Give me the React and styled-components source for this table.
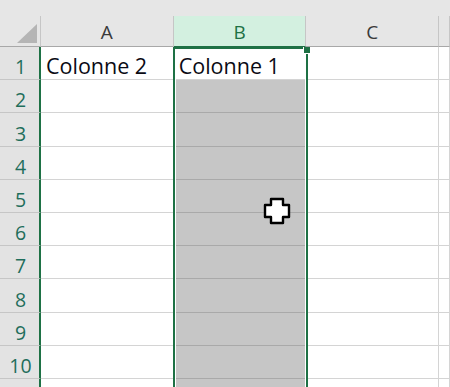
import React from 'react';
import styled, { createGlobalStyle } from 'styled-components';

const GlobalStyle = createGlobalStyle`
  html, body {
    margin: 0;
    padding: 0;
    background: #ffffff;
    overflow: hidden;
  }
`;

const GREEN = '#1e7145';
const COLS = ['A', 'B', 'C', ''];
const ROWS = 11;

const cellText = {
  1: { A: 'Colonne 2', B: 'Colonne 1' },
};

const StSheet = styled.div`
  position: relative;
  width: 450px;
  height: 387px;
  overflow: hidden;
  font-family: 'Open Sans', 'Liberation Sans', sans-serif;
  background: #ffffff;
`;

const StTopBand = styled.div`
  height: 16px;
  background: #e6e6e6;
`;

const StGrid = styled.div`
  display: grid;
  grid-template-columns: 41px repeat(3, 132.7px) 1fr;
  grid-template-rows: 31px repeat(${ROWS}, 33.2px);
`;

const StCorner = styled.div`
  background: #e6e6e6;
  border-right: 1px solid #c6c6c6;
  border-bottom: 1px solid #a8a8a8;
  display: flex;
  align-items: flex-end;
  justify-content: flex-end;
  padding: 0 3px 3px 0;
`;

const StTriangle = styled.div`
  width: 0;
  height: 0;
  border-left: 20px solid transparent;
  border-bottom: 19px solid #b5b5b5;
`;

const StColHeader = styled.div`
  background: ${(p) => (p.$active ? '#d3f0e0' : '#e6e6e6')};
  color: ${(p) => (p.$active ? GREEN : '#3a3a3a')};
  border-right: 1px solid #c6c6c6;
  border-bottom: 1px solid ${(p) => (p.$active ? GREEN : '#a8a8a8')};
  display: flex;
  align-items: center;
  justify-content: center;
  font-size: 19px;
  padding-top: 2px;
`;

const StRowHeader = styled.div`
  background: #e3e3e3;
  color: #1f6e5b;
  border-right: 2px solid ${GREEN};
  border-bottom: 1px solid #c6c6c6;
  display: flex;
  align-items: flex-end;
  justify-content: center;
  font-size: 19.5px;
  line-height: 24px;
  padding-bottom: 0;
  padding-left: 2px;
`;

const StCell = styled.div`
  background: ${(p) => (p.$selected ? '#c6c6c6' : '#ffffff')};
  border-right: 1px solid #d4d4d4;
  border-bottom: 1px solid ${(p) => (p.$selected ? '#a9a9a9' : '#d4d4d4')};
  display: flex;
  align-items: flex-end;
  padding: 0 0 0 5px;
  font-size: 21.5px;
  line-height: 26px;
  color: #0a0a14;
  white-space: nowrap;
  overflow: hidden;
`;

// green frame around the selected column
const StSelection = styled.div`
  position: absolute;
  left: 173px;
  top: 47px;
  width: 135px;
  bottom: -4px;
  box-sizing: border-box;
  border: 2px solid ${GREEN};
  box-shadow: inset 0 0 0 1px #ffffff;
  pointer-events: none;
`;

const StFillHandle = styled.div`
  position: absolute;
  left: 303px;
  top: 47px;
  width: 6px;
  height: 6px;
  background: ${GREEN};
  border-left: 1px solid #ffffff;
  border-bottom: 1px solid #ffffff;
`;

const StCursor = styled.svg`
  position: absolute;
  left: 263px;
  top: 197px;
`;

const App = () => {
  const rows = Array.from({ length: ROWS }, (_, i) => i + 1);

  return (
    <StSheet>
      <GlobalStyle />
      <StTopBand />
      <StGrid>
        <StCorner>
          <StTriangle />
        </StCorner>
        {COLS.map((c, i) => (
          <StColHeader key={i} $active={c === 'B'}>
            {c}
          </StColHeader>
        ))}
        {rows.map((r) => (
          <React.Fragment key={r}>
            {/* last row only peeks in at the bottom edge */}
            <StRowHeader>{r < ROWS ? r : ''}</StRowHeader>
            {COLS.map((c, i) => (
              <StCell key={i} $selected={c === 'B' && r > 1}>
                {(cellText[r] && cellText[r][c]) || ''}
              </StCell>
            ))}
          </React.Fragment>
        ))}
      </StGrid>
      <StSelection />
      <StFillHandle />
      <StCursor width="28" height="28" viewBox="0 0 28 28">
        <path
          d="M8 2h12v6h6v12h-6v6H8v-6H2V8h6z"
          fill="#ffffff"
          stroke="#000000"
          strokeWidth="2.4"
          strokeLinejoin="round"
        />
      </StCursor>
    </StSheet>
  );
};

export default App;
